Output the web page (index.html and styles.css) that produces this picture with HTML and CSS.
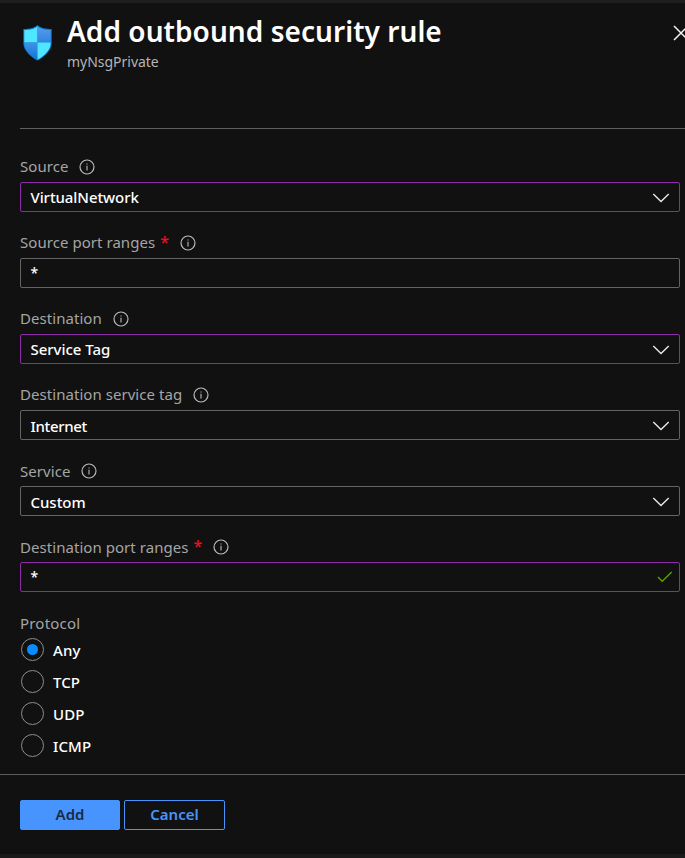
FILE: index.html
```html
<!DOCTYPE html>
<html lang="en">
<head>
<meta charset="utf-8">
<title>Add outbound security rule</title>
<link rel="stylesheet" href="styles.css">
</head>
<body>
<svg class="defs" width="0" height="0">
  <defs>
    <linearGradient id="shade" x1="0" y1="0" x2="0" y2="1"><stop offset="0" stop-color="#5e9cee"/><stop offset="1" stop-color="#2f86e0"/></linearGradient>
    <linearGradient id="shade-low" x1="0" y1="0" x2="0" y2="1"><stop offset="0" stop-color="#3f93e6"/><stop offset="1" stop-color="#0f72d2"/></linearGradient>
    <clipPath id="shield-clip"><path d="M15 1.2C19 4.6 23 4.8 28.2 5V18C28.2 26 20 32 15 34.5C10 32 1.8 26 1.8 18V5C7 4.8 11 4.6 15 1.2Z"/></clipPath>
    <symbol id="info" viewBox="0 0 16 16"><circle cx="8" cy="8" r="7" fill="none" stroke="#bdbdbd" stroke-width="1.15"/><path d="M8 6.7V11.4M8 4.4V5.5" stroke="#bdbdbd" stroke-width="1.1"/></symbol>
    <symbol id="chevron" viewBox="0 0 18 10"><path d="M1.3 1L9 8.5L16.7 1" fill="none" stroke="#e8e8e8" stroke-width="1.4"/></symbol>
  </defs>
</svg>
<main class="panel">
  <header class="header">
    <svg class="shield" viewBox="0 0 30 36">
      <path d="M15 0C19 3.5 23 3.9 29.2 4V18C29.2 26.5 20 33 15 35.5C10 33 .8 26.5 .8 18V4C7 3.9 11 3.5 15 0Z" fill="#087bd5"/>
      <g clip-path="url(#shield-clip)">
        <path d="M0 0H15V17.5H0Z" fill="#50e6ff"/><path d="M15 0H30V17.5H15Z" fill="url(#shade)"/>
        <path d="M0 17.5H15V36H0Z" fill="url(#shade-low)"/><path d="M15 17.5H30V36H15Z" fill="#50e6ff"/>
      </g>
    </svg>
    <div class="heading"><h1>Add outbound security rule</h1><p>myNsgPrivate</p></div>
    <svg class="close" viewBox="0 0 16 16"><path d="M1 1L15 15M15 1L1 15" stroke="#f4f4f4" stroke-width="1.5"/></svg>
  </header>
  <form class="form">
    <div class="field"><div class="label"><span>Source</span><svg class="info"><use href="#info"/></svg></div><div class="box edited"><span class="snug">VirtualNetwork</span><svg class="chevron"><use href="#chevron"/></svg></div></div>
    <div class="field"><div class="label"><span>Source port ranges</span><b>*</b><svg class="info"><use href="#info"/></svg></div><div class="box"><span class="star">*</span></div></div>
    <div class="field"><div class="label"><span>Destination</span><svg class="info"><use href="#info"/></svg></div><div class="box edited"><span>Service Tag</span><svg class="chevron"><use href="#chevron"/></svg></div></div>
    <div class="field"><div class="label"><span>Destination service tag</span><svg class="info"><use href="#info"/></svg></div><div class="box lower"><span class="tight">Internet</span><svg class="chevron"><use href="#chevron"/></svg></div></div>
    <div class="field"><div class="label lower"><span>Service</span><svg class="info"><use href="#info"/></svg></div><div class="box lower"><span>Custom</span><svg class="chevron"><use href="#chevron"/></svg></div></div>
    <div class="field"><div class="label lower"><span>Destination port ranges</span><b>*</b><svg class="info"><use href="#info"/></svg></div><div class="box edited"><span class="star">*</span><svg class="check" viewBox="0 0 16 12"><path d="M1 6L5.2 10.3L14.7 1" fill="none" stroke="#57a300" stroke-width="1.4"/></svg></div></div>
    <div class="protocol">
      <div class="label"><span class="wide">Protocol</span></div>
      <div class="option"><i class="radio checked"></i><span>Any</span></div>
      <div class="option"><i class="radio"></i><span>TCP</span></div>
      <div class="option"><i class="radio"></i><span>UDP</span></div>
      <div class="option"><i class="radio"></i><span>ICMP</span></div>
    </div>
  </form>
  <footer class="footer"><button class="primary">Add</button><button class="secondary">Cancel</button></footer>
</main>
</body>
</html>
```
FILE: styles.css
```css
* { box-sizing: border-box; }
body { margin: 0; background: #111; color: #fff; font: 15px/20px "Noto Sans", "Open Sans", sans-serif; overflow: hidden; }
.defs { display: block; }
.panel { height: 858px; display: flex; flex-direction: column; border-top: 3px solid #1f1f1f; border-bottom: 4px solid #1b1b1b; overflow: hidden; }
.header { height: 126px; flex: none; margin-left: 20px; padding: 8px 0 0 2px; display: flex; align-items: flex-start; border-bottom: 1px solid #606060; }
.shield { width: 31px; height: 36px; margin-top: 14px; flex: none; }
.heading { margin-left: 14px; flex: 1; white-space: nowrap; }
h1 { margin: 0; font-size: 28px; line-height: 40px; font-weight: 650; letter-spacing: 0.05px; }
.heading p { margin: 1px 0 0; font-size: 14px; line-height: 20px; color: #b5b5b5; letter-spacing: -0.02px; }
.close { width: 16px; height: 16px; flex: none; margin: 14px -4px 0 0; }
.form { padding: 27px 5px 0 20px; flex: none; }
.field { height: 76px; }
.label { height: 26px; display: flex; align-items: flex-start; color: #a5a5a5; white-space: nowrap; letter-spacing: 0.05px; }
.label.lower span { margin-top: 1px; }
.label b { color: #e81123; margin-left: 5px; font-weight: 500; font-size: 16px; }
.info { width: 16px; height: 16px; margin: 3px 0 0 11px; }
.label b + .info { margin-left: 11px; }
.box { height: 30px; border: 1px solid #646464; border-radius: 2px; display: flex; align-items: center; justify-content: space-between; padding: 0 9px 0 10px; font-weight: 500; white-space: nowrap; }
.box span { margin-left: -0.5px; letter-spacing: -0.03px; }
.box .snug { letter-spacing: -0.08px; }
.box .tight { letter-spacing: -0.35px; }
.box .star { font-size: 14px; }
.box.lower span { margin-top: 2px; }
.edited { border-color: #8c2aa8; }
.chevron { width: 18px; height: 10px; margin-top: 2px; }
.check { width: 16px; height: 12px; margin-right: -3px; }
.protocol { padding-top: 1px; }
.protocol .label { height: 25px; }
.wide { letter-spacing: 0.2px; }
.option { height: 32px; display: flex; align-items: flex-start; font-weight: 500; }
.option span { margin: 2px 0 0 9px; letter-spacing: 0.1px; }
.radio { width: 23px; height: 23px; border: 1px solid #8e8e8e; border-radius: 50%; margin: 0 0 0 1px; display: flex; align-items: center; justify-content: center; }
.checked::after { content: ""; width: 11px; height: 11px; margin-left: -1px; margin-top: -1px; border-radius: 50%; background: #0a8cff; }
.footer { margin-top: auto; height: 80px; flex: none; border-top: 1px solid #5c5c5c; padding: 25px 0 0 20px; display: flex; gap: 4px; }
button { width: 100px; height: 30px; border-radius: 2px; border: 1px solid #4894fe; padding: 0 0 2px; font: 600 15px/20px "Noto Sans", "Open Sans", sans-serif; }
.primary { background: #4894fe; color: #1b2a40; }
.secondary { width: 101px; background: transparent; color: #4894fe; }
```
